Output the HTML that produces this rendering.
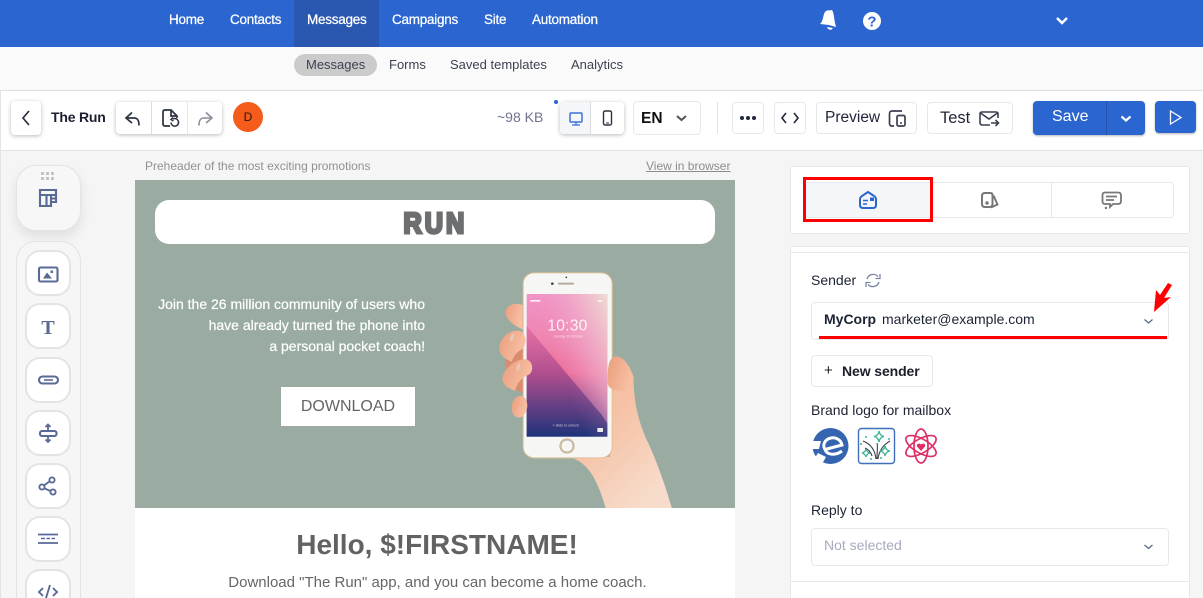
<!DOCTYPE html>
<html lang="en"><head><meta charset="utf-8"><title>The Run</title>
<style>
*{box-sizing:border-box}
html,body{margin:0;padding:0;width:1203px;height:598px;overflow:hidden}
#root{width:1203px;height:598px;overflow:hidden;position:relative;background:#f5f5f6;font-family:"Liberation Sans",sans-serif;color:#1c2333}
.a{position:absolute}
.t{position:absolute;white-space:nowrap;line-height:20px}
.nav{color:#fff;font-size:13.5px;top:10px;-webkit-text-stroke:.25px #fff;letter-spacing:-.25px}
.sub{color:#3c4252;font-size:13px;top:55px}
.box{position:absolute;background:#fff;border:1px solid #e6e8ee;border-radius:4px}
.shadow{box-shadow:0 1px 4px rgba(0,0,0,.28);border:0;background:#fff;border-radius:4px;position:absolute}
.tool{position:absolute;left:25px;width:46px;height:46px;background:#fff;border:2px solid #e4e4e6;border-radius:15px}
svg{position:absolute;overflow:hidden}
</style></head><body><div id="root">

<!-- top nav -->
<div class="a" style="left:0;top:0;width:1203px;height:47px;background:#2b65cf"></div>
<div class="a" style="left:294px;top:0;width:85px;height:47px;background:#2a58b1"></div>
<span class="t nav" style="left:169px">Home</span>
<span class="t nav" style="left:230px">Contacts</span>
<span class="t nav" style="left:307px">Messages</span>
<span class="t nav" style="left:392px">Campaigns</span>
<span class="t nav" style="left:484px">Site</span>
<span class="t nav" style="left:532px">Automation</span>
<svg style="left:0;top:0" width="1203" height="47">
<path d="M820 24 C823 21 823 17 824 14 C825 11 827 10 829 10.500 L832 10 C834 13 834 18 835 23 L836 27 L829 25 Z" fill="#fff"/><path d="M827 27 L833 28 L831 30 L828 29Z" fill="#fff"/>
<circle cx="872" cy="21" r="9" fill="#fff"/>
<text x="872" y="26.500" font-size="15" font-weight="700" font-family="Liberation Sans" fill="#2b65cf" text-anchor="middle">?</text>
<path d="M1057 18 L1062 23 L1067 18" fill="none" stroke="#fff" stroke-width="2.400"/>
</svg>

<!-- sub nav -->
<div class="a" style="left:0;top:47px;width:1203px;height:44px;background:#fafafa;border-bottom:1px solid #dedede"></div>
<div class="a" style="left:294px;top:54px;width:83px;height:22px;border-radius:11px;background:#cbcbcb"></div>
<span class="t sub" style="left:306px">Messages</span>
<span class="t sub" style="left:389px">Forms</span>
<span class="t sub" style="left:450px">Saved templates</span>
<span class="t sub" style="left:571px">Analytics</span>

<!-- toolbar -->
<div class="a" style="left:0;top:91px;width:1203px;height:60px;background:#fff;border-bottom:1px solid #e2e2e4"></div>
<div class="shadow" style="left:11px;top:101px;width:30px;height:34px"></div>
<svg style="left:0;top:0" width="60" height="140"><path d="M29 111 L23 118 L29 125" fill="none" stroke="#2a3040" stroke-width="1.700"/></svg>
<span class="t" style="left:51px;top:107px;font-size:14px;font-weight:700;color:#1a2030;letter-spacing:-.2px">The Run</span>
<div class="shadow" style="left:116px;top:102px;width:106px;height:32px"></div>
<div class="a" style="left:151px;top:102px;width:1px;height:32px;background:#d9dbe0"></div>
<div class="a" style="left:187px;top:102px;width:1px;height:32px;background:#e6e6ea"></div>
<svg style="left:0;top:0" width="300" height="140">
<path d="M132 112.500 L126 118 L132 123 M126 118 H134 C138 118 139 121 139 125.500" fill="none" stroke="#2d3240" stroke-width="1.700"/>
<path d="M170 126 H165 C163.500 126 163 125 163 124 V112 C163 111 163.500 110 165 110 H171 L177 116 V118 M171 110 V116 H177" fill="none" stroke="#2d3240" stroke-width="1.700"/>
<path d="M171 122.500 A3.800 3.800 0 1 0 173 119 M173 117.500 L171 119.500 L173.500 121" fill="none" stroke="#2d3240" stroke-width="1.500"/>
<path d="M206 112.500 L212 118 L206 123 M212 118 H204 C200 118 199 121 199 125.500" fill="none" stroke="#8a8e98" stroke-width="1.600"/>
<circle cx="248" cy="117" r="15" fill="#f55c1c"/>
<text x="248" y="121" font-size="12" font-family="Liberation Sans" fill="#2a1510" text-anchor="middle">D</text>
</svg>
<span class="t" style="left:497px;top:107px;font-size:14px;color:#6d7490">~98 KB</span>
<div class="a" style="left:554px;top:100px;width:4px;height:4px;border-radius:2px;background:#2b65cf"></div>
<div class="shadow" style="left:560px;top:102px;width:64px;height:32px;overflow:hidden"><div style="width:31px;height:32px;background:#f4f6fa;border-right:1px solid #d9dbe0"></div></div>
<svg style="left:0;top:0" width="640" height="140">
<rect x="570" y="113" width="12" height="9" rx="1" fill="none" stroke="#3b71d6" stroke-width="1.500"/><path d="M576 122 V125 M572 125 H580" stroke="#3b71d6" stroke-width="1.300"/>
<rect x="603.500" y="111" width="8" height="14" rx="1.500" fill="none" stroke="#2d3240" stroke-width="1.400"/><path d="M606 123 H609" stroke="#2d3240"/>
</svg>
<div class="box" style="left:633px;top:101px;width:68px;height:34px"></div>
<span class="t" style="left:641px;top:108.500px;font-size:15.500px;font-weight:700;color:#111">EN</span>
<svg style="left:0;top:0" width="700" height="140"><path d="M677 116 L681.500 120 L686 116" fill="none" stroke="#555" stroke-width="2"/></svg>
<div class="a" style="left:717px;top:102px;width:1px;height:32px;background:#e4e4e8"></div>
<div class="box" style="left:732px;top:102px;width:32px;height:32px"></div>
<div class="box" style="left:774px;top:102px;width:32px;height:32px"></div>
<div class="box" style="left:816px;top:102px;width:101px;height:32px"></div>
<div class="box" style="left:927px;top:102px;width:86px;height:32px"></div>
<span class="t" style="left:825px;top:108px;font-size:15.500px;color:#20273a">Preview</span>
<span class="t" style="left:940px;top:108px;font-size:16.500px;color:#20273a">Test</span>
<svg style="left:0;top:0" width="1100" height="140">
<circle cx="742" cy="118" r="2" fill="#20273a"/><circle cx="748" cy="118" r="2" fill="#20273a"/><circle cx="754" cy="118" r="2" fill="#20273a"/>
<path d="M786 113 L782 118 L786 123 M794 113 L798 118 L794 123" fill="none" stroke="#20273a" stroke-width="1.600"/>
<path d="M894 126 H892 C890 126 889.500 125 889.500 123 V113.500 C889.500 112 890.500 111 892 111 H902" fill="none" stroke="#3a4050" stroke-width="1.700"/>
<rect x="897" y="115.500" width="8" height="10.500" rx="1.500" fill="none" stroke="#3a4050" stroke-width="1.700"/><path d="M900 123 H902" stroke="#3a4050" stroke-width="1.500"/>
<path d="M990 125 H982 C981 125 980 124 980 123 V113.500 C980 112.500 981 112 982 112 H996 C997 112 998 112.500 998 113.500 V118 M980.500 113 L989 119 L997.500 113 M991 123 H998 M995.500 120 L998.500 123 L995.500 126" fill="none" stroke="#3a4050" stroke-width="1.600"/>
</svg>
<div class="a" style="left:1033px;top:101px;width:112px;height:34px;border-radius:4px;background:#2b65cf;box-shadow:0 1px 2px rgba(0,0,0,.3)"></div>
<div class="a" style="left:1106px;top:101px;width:1px;height:34px;background:#2354ac"></div>
<span class="t" style="left:1052px;top:106.500px;font-size:16px;color:#fff">Save</span>
<div class="a" style="left:1155px;top:101px;width:41px;height:32px;border-radius:4px;background:#2b65cf;box-shadow:0 1px 2px rgba(0,0,0,.3)"></div>
<svg style="left:0;top:0" width="1203" height="140">
<path d="M1121.500 116.500 L1126 120.500 L1130.500 116.500" fill="none" stroke="#fff" stroke-width="2.200"/>
<path d="M1170.500 111 L1181 117.500 L1170.500 124 Z" fill="none" stroke="#fff" stroke-width="1.300"/>
</svg>

<!-- left canvas edge -->
<div class="a" style="left:0;top:91px;width:1px;height:507px;background:#e4e4e6"></div>

<!-- sidebar -->
<div class="a" style="left:16px;top:165px;width:65px;height:66px;background:#f7f7f8;border:1px solid #e4e4e6;border-radius:20px;box-shadow:0 6px 12px rgba(0,0,0,.09)"></div>
<div class="a" style="left:16px;top:241px;width:65px;height:357px;background:#f6f6f7;border:1px solid #e4e4e6;border-bottom:0;border-radius:20px 20px 0 0"></div>
<div class="tool" style="top:250px"></div>
<div class="tool" style="top:303px"></div>
<div class="tool" style="top:357px"></div>
<div class="tool" style="top:410px"></div>
<div class="tool" style="top:463px"></div>
<div class="tool" style="top:516px"></div>
<div class="tool" style="top:569px;height:29px;border-bottom:0;border-radius:15px 15px 0 0"></div>
<svg style="left:0;top:0" width="100" height="598">
<g fill="#c4c4c8"><rect x="41" y="172" width="3" height="3"/><rect x="46" y="172" width="3" height="3"/><rect x="51" y="172" width="3" height="3"/><rect x="41" y="177" width="3" height="3"/><rect x="46" y="177" width="3" height="3"/><rect x="51" y="177" width="3" height="3"/></g>
<g fill="none" stroke="#5a6a96" stroke-width="2.100">
<path d="M40 190 H56 V202 H51 V206 H40 Z M40 195 H56 M46.500 195 V206 M51 195 V202 M51 198.500 H56"/>
<rect x="39" y="267.500" width="18.500" height="14" rx="1.500"/>
<rect x="39" y="376.500" width="19" height="7" rx="3.500"/>
<path d="M44 380 H53" stroke-width="1.600"/>
<rect x="40" y="431" width="16.500" height="5" rx="2"/>
<path d="M48 426 V431 M48 436 V441 M45.500 427 L48 424.500 L50.500 427 M45.500 439.500 L48 442 L50.500 439.500" stroke-width="1.800"/>
<circle cx="52" cy="480" r="2.600" stroke-width="1.900"/><circle cx="42" cy="487" r="2.600" stroke-width="1.900"/><circle cx="53" cy="492" r="2.600" stroke-width="1.900"/><path d="M44.500 485 L49.500 481.500 M44.500 488.500 L50.500 491" stroke-width="1.900"/>
<path d="M38 534.500 H58 M38 543 H58" stroke-width="1.800"/><path d="M41 538.500 H45 M46.500 538.500 H50 M51.500 538.500 H55" stroke-width="1.400"/>
<path d="M43 588 L39 592 L43 596 M53 588 L57 592 L53 596 M50 585 L46 598" stroke-width="1.900"/>
</g>
<path d="M43 278.500 L47 272.500 L52 278.500 Z" fill="#5a6a96"/><rect x="50.500" y="270.500" width="2.500" height="2.500" fill="#5a6a96"/>
<text x="48" y="334" font-size="20" font-weight="700" font-family="Liberation Serif" fill="#5a6a96" text-anchor="middle">T</text>
</svg>

<!-- preheader -->
<span class="t" style="left:145px;top:156px;font-size:12px;color:#919191">Preheader of the most exciting promotions</span>
<span class="t" style="left:646px;top:156px;font-size:12px;color:#8c8c8c;text-decoration:underline">View in browser</span>

<!-- hero -->
<div class="a" style="left:135px;top:180px;width:600px;height:328px;background:#9aaca2"></div>
<div class="a" style="left:135px;top:508px;width:600px;height:90px;background:#fff"></div>
<div class="a" style="left:155px;top:200px;width:560px;height:44px;background:#fff;border-radius:14px"></div>
<svg style="left:0;top:0" width="800" height="300"><text transform="translate(403.500,232.800) scale(.87,1)" font-size="29" font-weight="700" font-family="Liberation Sans" fill="#6d6e70" stroke="#6d6e70" stroke-width="3" letter-spacing="3.500">RUN</text></svg>
<div class="a" style="left:135px;top:294px;width:290px;text-align:right;color:#fff;font-size:14px;line-height:21px;-webkit-text-stroke:.2px #fff">Join the 26 million community of users who<br>have already turned the phone into<br>a personal pocket coach!</div>
<div class="a" style="left:281px;top:387px;width:134px;height:39px;background:#fff;color:#636466;font-size:16px;line-height:39px;text-align:center">DOWNLOAD</div>

<!-- phone & hand -->
<svg style="left:0;top:0" width="1203" height="598">
<defs>
<linearGradient id="sk" x1="0" y1="0" x2=".6" y2="1"><stop offset="0" stop-color="#f3b294"/><stop offset=".55" stop-color="#f6c6ab"/><stop offset="1" stop-color="#f7dccb"/></linearGradient>
<linearGradient id="f" x1="0" y1="0" x2="1" y2=".4"><stop offset="0" stop-color="#e99e7c"/><stop offset="1" stop-color="#f8bfa3"/></linearGradient>
<linearGradient id="scr" x1="0" y1="0" x2="0" y2="1"><stop offset="0" stop-color="#f094c6"/><stop offset=".3" stop-color="#ef86b2"/><stop offset=".55" stop-color="#ec6f98"/><stop offset=".8" stop-color="#7d4a88"/><stop offset="1" stop-color="#1e3379"/></linearGradient>
<linearGradient id="tr" x1="1" y1="0" x2=".35" y2=".45"><stop offset="0" stop-color="#efdcd3"/><stop offset=".55" stop-color="#f0a8c8" stop-opacity=".7"/><stop offset="1" stop-color="#f094c6" stop-opacity="0"/></linearGradient>
<linearGradient id="scr2" x1="0" y1="0" x2="0" y2="1"><stop offset="0" stop-color="#e4669e"/><stop offset=".45" stop-color="#94408a"/><stop offset="1" stop-color="#1e3379"/></linearGradient>
<clipPath id="heroClip"><rect x="135" y="180" width="600" height="328"/></clipPath>
</defs>
<g clip-path="url(#heroClip)"><g transform="translate(470,260) scale(.33333)">
<path d="M310 595 C360 615 385 665 412 760 L610 760 C585 670 555 590 528 535 C500 470 492 420 490 350 C480 320 462 290 438 290 C415 292 410 320 413 370 L420 590 Z" fill="url(#sk)"/>
<path d="M158 135 C140 128 112 130 106 155 C106 180 135 198 158 208 Z" fill="url(#f)"/>
<path d="M102 270 L165 240 L165 405 L115 375Z" fill="#d98c6e"/>
<rect x="158" y="37" width="270" height="558" rx="34" fill="#e0bf96"/>
<rect x="161" y="40" width="264" height="552" rx="31" fill="#f6f6f4"/>
<rect x="170" y="102" width="242" height="428" fill="url(#scr)"/>
<rect x="170" y="102" width="242" height="428" fill="url(#tr)"/>
<path d="M170 198 L395 465 L412 490 V530 H170 Z" fill="url(#scr2)" opacity=".7"/>
<path d="M88 260 C95 225 125 208 150 213 C170 222 172 255 155 268 C140 275 130 290 125 305 C100 295 85 280 88 260Z" fill="url(#f)"/>
<path d="M97 355 C105 320 140 295 170 298 C190 305 192 335 175 345 C155 352 140 370 135 393 C115 385 97 375 97 355Z" fill="url(#f)"/>
<path d="M150 408 C128 410 120 440 128 460 C140 480 165 478 172 440 C172 420 165 408 150 408 Z" fill="url(#f)"/>
<ellipse cx="126" cy="232" rx="5" ry="13" transform="rotate(20 126 232)" fill="#e8c6b8"/>
<ellipse cx="145" cy="321" rx="5" ry="12" transform="rotate(20 145 321)" fill="#e8c6b8"/>
<circle cx="289" cy="52" r="2.500" fill="#333"/><circle cx="247" cy="71" r="4" fill="#3c4654"/>
<rect x="264" y="68" width="48" height="6" rx="3" fill="#b5ad9f"/>
<circle cx="291" cy="558" r="21" fill="#f6f6f4" stroke="#cdb68f" stroke-width="4"/>
<circle cx="291" cy="558" r="18" fill="none" stroke="#555" stroke-width="1"/>
<path d="M413 370 C413 320 415 292 438 290 C462 290 480 320 490 350 C490 385 470 395 450 392 C430 390 415 385 413 370Z" fill="url(#f)"/>
<text x="292" y="212" font-size="47" font-family="Liberation Sans" fill="#fff" fill-opacity=".85" text-anchor="middle" textLength="120">10:30</text>
<text x="295" y="232" font-size="10" font-family="Liberation Sans" fill="#fff" fill-opacity=".7" text-anchor="middle">Sunday 30 October</text>
<text x="287" y="500" font-size="11" font-family="Liberation Sans" fill="#fff" fill-opacity=".7" text-anchor="middle">&gt; slide to unlock</text>
<rect x="382" y="504" width="17" height="12" rx="2" fill="#eee"/>
<rect x="181" y="120" width="30" height="5" fill="#fff" fill-opacity=".85"/>
<rect x="384" y="120" width="12" height="5" fill="#fff" fill-opacity=".8"/>
</g></g>
</svg>

<!-- body copy -->
<div class="a" style="left:135px;top:526.500px;width:604px;text-align:center;font-size:28px;line-height:36px;font-weight:700;color:#626262">Hello, $!FIRSTNAME!</div>
<div class="a" style="left:135px;top:573px;width:605px;text-align:center;font-size:15px;line-height:20px;color:#666">Download "The Run" app, and you can become a home coach.</div>

<!-- right panel -->
<div class="box" style="left:790px;top:166px;width:400px;height:68px;border-radius:3px"></div>
<div class="box" style="left:804px;top:182px;width:370px;height:36px"></div>
<div class="a" style="left:806px;top:183px;width:123px;height:34px;background:#f4f6fa"></div>
<div class="a" style="left:1051px;top:183px;width:1px;height:34px;background:#e6e8ee"></div>
<div class="a" style="left:803px;top:177px;width:130px;height:45px;border:3px solid #f00"></div>
<svg style="left:0;top:0" width="1203" height="240">
<path d="M860 202 C860 198 860 197 862 196 L868 192 L874 196 C876 197 876 198 876 202 V205 C876 207 875 208 873 208 H863 C861 208 860 207 860 205Z" fill="none" stroke="#2b65cf" stroke-width="2"/>
<path d="M863 200.500 H868 M863 204 H867" stroke="#2b65cf" stroke-width="1.500"/><rect x="870" y="197.500" width="4" height="3.500" fill="#2b65cf"/>
<path d="M990.500 193 H985 C983 193 982 194 982 196 V204 C982 206 983 207 985 207 H989.500 C991.500 207 992.500 206 992.500 204 V195 C992.500 194 992 193 990.500 193Z M993.500 195.500 L997.500 204.500 L991 207.500" fill="none" stroke="#777" stroke-width="2"/>
<circle cx="987" cy="203" r="1.700" fill="#777"/>
<path d="M1105 192.500 H1118 C1120 192.500 1121 193.500 1121 195.500 V201 C1121 203 1120 204 1118 204 H1113 L1110 207 V204 H1105 C1103 204 1102.500 203 1102.500 201 V195.500 C1102.500 193.500 1103 192.500 1105 192.500Z M1106 196.500 H1117 M1106 200 H1114" fill="none" stroke="#777" stroke-width="1.800"/>
<circle cx="1106" cy="208" r="1.200" fill="#777"/>
</svg>
<div class="a" style="left:790px;top:246px;width:400px;height:352px;background:#fff;border:1px solid #e6e8ee;border-bottom:0;border-radius:3px 3px 0 0"></div>
<div class="a" style="left:791px;top:252px;width:398px;height:1px;background:#e6e8ee"></div>
<div class="a" style="left:791px;top:581px;width:398px;height:1px;background:#e6e8ee"></div>
<span class="t" style="left:811px;top:270px;font-size:14px">Sender</span>
<div class="box" style="left:811px;top:302px;width:358px;height:38px"></div>
<span class="t" style="left:824px;top:309px;font-size:14px;font-weight:700">MyCorp</span>
<span class="t" style="left:882px;top:309px;font-size:14px">marketer@example.com</span>
<div class="a" style="left:819px;top:336px;width:348px;height:3px;background:#f00"></div>
<div class="box" style="left:811px;top:355px;width:122px;height:32px"></div>
<span class="t" style="left:824px;top:361px;font-size:15px;color:#222">+</span>
<span class="t" style="left:842px;top:361px;font-size:14px;font-weight:700;color:#1a1e28;letter-spacing:-.1px">New sender</span>
<span class="t" style="left:811px;top:400px;font-size:14px">Brand logo for mailbox</span>
<span class="t" style="left:811px;top:500px;font-size:14px">Reply to</span>
<div class="box" style="left:811px;top:528px;width:358px;height:38px"></div>
<span class="t" style="left:824px;top:535px;font-size:14px;color:#a6aabd">Not selected</span>
<svg style="left:0;top:0" width="1203" height="598">
<path d="M867 279 A6.500 6.500 0 0 1 878 276.500 M880 274 V278.500 H875.500 M879 282 A6.500 6.500 0 0 1 868 284.500 M866 287 V282.500 H870.500" fill="none" stroke="#7a86a4" stroke-width="1.300"/>
<path d="M1144.500 319.500 L1148.500 323 L1152.500 319.500" fill="none" stroke="#5e6a8c" stroke-width="1.300"/>
<path d="M1144.500 545 L1148.500 548.500 L1152.500 545" fill="none" stroke="#5e6a8c" stroke-width="1.300"/>
<path d="M1168 283 L1172 285 L1164 298 L1171 297 L1154 312 L1156 290 L1160 295 Z" fill="#f00"/>
<!-- logos -->
<circle cx="830.500" cy="446" r="18" fill="#3564b0"/>
<path d="M812 441 H821 L819 449 H812 Z M818 453 L826 457 L822 464 L814 459Z" fill="#fff"/>
<path d="M825 449.500 L842 445 C841 440 836 437 831 438 C825 439 822 445 825 449.500 C827 455 835 456 842 451" fill="none" stroke="#fff" stroke-width="3"/>
<rect x="858.500" y="428.500" width="36" height="35" rx="3" fill="#fff" stroke="#3f6fb8" stroke-width="1.400"/>
<g fill="none" stroke="#3a3f4c" stroke-width="1.100">
<path d="M876 459 C875 450 871 444 863 441 M877 459 C877 452 878 446 877 443 M878 459 C879 451 883 445 890 441 M872 456 C871 452 868 449 865 448"/>
</g>
<g fill="none" stroke="#3cb496" stroke-width="1.300">
<path d="M879 431 C879.500 434 881 436 884 436.500 C881 437 879.500 439 879 442 C878.500 439 877 437 874 436.500 C877 436 878.500 434 879 431Z M885 446 C885.500 449 887 450.500 890 451 C887 451.500 885.500 453 885 456 C884.500 453 883 451.500 880 451 C883 450.500 884.500 449 885 446Z M866 449 C866.500 451 868 452.500 870 453 C868 453.500 866.500 455 866 457 C865.500 455 864 453.500 862 453 C864 452.500 865.500 451 866 449Z"/>
</g>
<g fill="#3cb496"><circle cx="866" cy="437" r="1"/><circle cx="889" cy="439" r="1"/><circle cx="861" cy="444" r="1"/><circle cx="871" cy="459" r="1"/><circle cx="881" cy="458" r="1"/></g>
<g fill="none" stroke="#df2e66" stroke-width="1.700">
<ellipse cx="921" cy="446" rx="17" ry="7" transform="rotate(30 921 446)"/>
<ellipse cx="921" cy="446" rx="17" ry="7" transform="rotate(-30 921 446)"/>
<ellipse cx="921" cy="446" rx="17" ry="7" transform="rotate(90 921 446)"/>
</g>
<path d="M921 451 L917 446.500 C916 444 919 442.500 921 444.500 C923 442.500 926 444 925 446.500 Z" fill="#df2e66"/>
</svg>
</div></body></html>
